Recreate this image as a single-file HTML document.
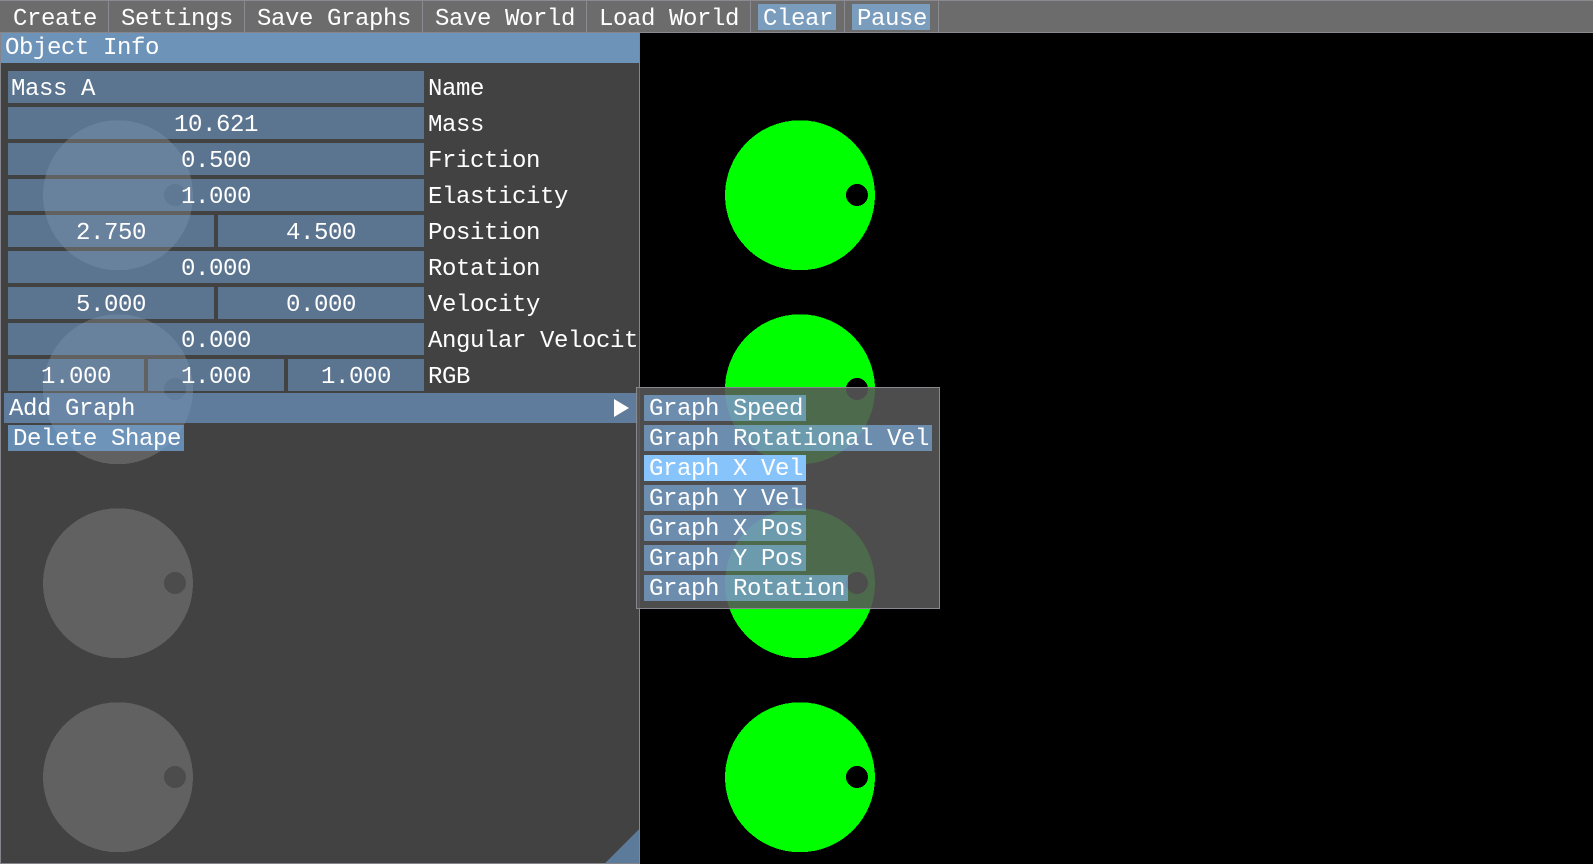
<!DOCTYPE html>
<html lang="en"><head><meta charset="utf-8"><title>Object Info</title>
<style>
html,body{margin:0;padding:0;background:#000;width:1593px;height:864px;overflow:hidden}
*{box-sizing:border-box}
body{position:relative;font-family:"Liberation Mono",monospace;font-size:24px;letter-spacing:-.4px;color:#fff}
div,span{position:absolute;white-space:pre}
.t{line-height:37px;height:37px}
.f{background:rgba(108,150,195,.6);height:32px}
.c{text-align:center;width:100%;left:0;top:0}
.s{background:#8a8a90;width:1px;top:1px;height:31px}
.i{background:rgba(135,195,255,.55);height:26px;left:7px}
.i .t{left:5px;top:-4px}
svg{shape-rendering:crispEdges}
</style></head><body>
<svg style="position:absolute;left:0;top:0" width="1593" height="864">
<g fill="#00ff00"><circle cx="800" cy="195.25" r="75"/><circle cx="800" cy="389.25" r="75"/><circle cx="800" cy="583.25" r="75"/><circle cx="800" cy="777.25" r="75"/></g>
<g fill="#000"><circle cx="857" cy="195" r="11"/><circle cx="857" cy="389" r="11"/><circle cx="857" cy="583" r="11"/><circle cx="857" cy="777" r="11"/></g>
</svg>

<div style="left:0;top:0;width:1593px;height:33px;background:#6c6c6c;border-top:1px solid #8a8a90;border-bottom:1px solid #8a8a90"></div>
<div class="s" style="left:108px"></div><div class="s" style="left:244px"></div><div class="s" style="left:422px"></div><div class="s" style="left:586px"></div><div class="s" style="left:750px"></div><div class="s" style="left:844px"></div><div class="s" style="left:938px"></div>
<div style="left:758px;top:4px;width:78px;height:26px;background:#7a9cbd"></div>
<div style="left:852px;top:4px;width:78px;height:26px;background:#7a9cbd"></div>
<div class="t" style="left:13px;top:1px">Create</div>
<div class="t" style="left:121px;top:1px">Settings</div>
<div class="t" style="left:257px;top:1px">Save Graphs</div>
<div class="t" style="left:435px;top:1px">Save World</div>
<div class="t" style="left:599px;top:1px">Load World</div>
<div class="t" style="left:763px;top:1px">Clear</div>
<div class="t" style="left:857px;top:1px">Pause</div>

<div style="left:0;top:32px;width:640px;height:832px;background:#424242;border:1px solid #85858b;overflow:hidden">
  <div style="left:0;top:0;width:638px;height:30px;background:#6e93b8"></div>
  <svg style="position:absolute;left:-1px;top:-33px" width="640" height="864">
    <g fill="#616161"><circle cx="118" cy="195.25" r="75"/><circle cx="118" cy="389.25" r="75"/><circle cx="118" cy="583.25" r="75"/><circle cx="118" cy="777.25" r="75"/></g>
    <g fill="#4c4c4c"><circle cx="175" cy="195" r="11"/><circle cx="175" cy="389" r="11"/><circle cx="175" cy="583" r="11"/><circle cx="175" cy="777" r="11"/></g>
    <polygon points="605,863 639,829 639,863" fill="#5c7a99"/>
  </svg>
  <div class="t" style="left:4px;top:-3px">Object Info</div>

  <div class="f" style="left:7px;top:38px;width:416px"><div class="t" style="left:3px;top:0">Mass A</div></div>
  <div class="f" style="left:7px;top:74px;width:416px"><div class="t c">10.621</div></div>
  <div class="f" style="left:7px;top:110px;width:416px"><div class="t c">0.500</div></div>
  <div class="f" style="left:7px;top:146px;width:416px"><div class="t c">1.000</div></div>
  <div class="f" style="left:7px;top:182px;width:206px"><div class="t c">2.750</div></div>
  <div class="f" style="left:217px;top:182px;width:206px"><div class="t c">4.500</div></div>
  <div class="f" style="left:7px;top:218px;width:416px"><div class="t c">0.000</div></div>
  <div class="f" style="left:7px;top:254px;width:206px"><div class="t c">5.000</div></div>
  <div class="f" style="left:217px;top:254px;width:206px"><div class="t c">0.000</div></div>
  <div class="f" style="left:7px;top:290px;width:416px"><div class="t c">0.000</div></div>
  <div class="f" style="left:7px;top:326px;width:136px"><div class="t c">1.000</div></div>
  <div class="f" style="left:147px;top:326px;width:136px"><div class="t c">1.000</div></div>
  <div class="f" style="left:287px;top:326px;width:136px"><div class="t c">1.000</div></div>

  <div class="t" style="left:427px;top:38px">Name</div>
  <div class="t" style="left:427px;top:74px">Mass</div>
  <div class="t" style="left:427px;top:110px">Friction</div>
  <div class="t" style="left:427px;top:146px">Elasticity</div>
  <div class="t" style="left:427px;top:182px">Position</div>
  <div class="t" style="left:427px;top:218px">Rotation</div>
  <div class="t" style="left:427px;top:254px">Velocity</div>
  <div class="t" style="left:427px;top:290px">Angular Velocity</div>
  <div class="t" style="left:427px;top:326px">RGB</div>

  <div style="left:3px;top:360px;width:634px;height:30px;background:rgba(108,150,195,.7)"></div>
  <div class="t" style="left:8px;top:358px">Add Graph</div>
  <svg style="position:absolute;left:613px;top:366px;shape-rendering:auto" width="16" height="18"><polygon points="0,0 15,9 0,18" fill="#fff"/></svg>

  <div style="left:7px;top:392px;width:176px;height:26px;background:rgba(115,165,215,.75)"></div>
  <div class="t" style="left:12px;top:388px">Delete Shape</div>
</div>

<div style="left:636px;top:387px;width:304px;height:222px;background:rgba(87,87,87,.886);border:1px solid #88888e">
  <div class="i" style="top:7px;width:162px"><div class="t">Graph Speed</div></div>
  <div class="i" style="top:37px;width:288px"><div class="t">Graph Rotational Vel</div></div>
  <div class="i" style="top:67px;width:162px;background:#87c4fb"><div class="t">Graph X Vel</div></div>
  <div class="i" style="top:97px;width:162px"><div class="t">Graph Y Vel</div></div>
  <div class="i" style="top:127px;width:162px"><div class="t">Graph X Pos</div></div>
  <div class="i" style="top:157px;width:162px"><div class="t">Graph Y Pos</div></div>
  <div class="i" style="top:187px;width:204px"><div class="t">Graph Rotation</div></div>
</div>
</body></html>
